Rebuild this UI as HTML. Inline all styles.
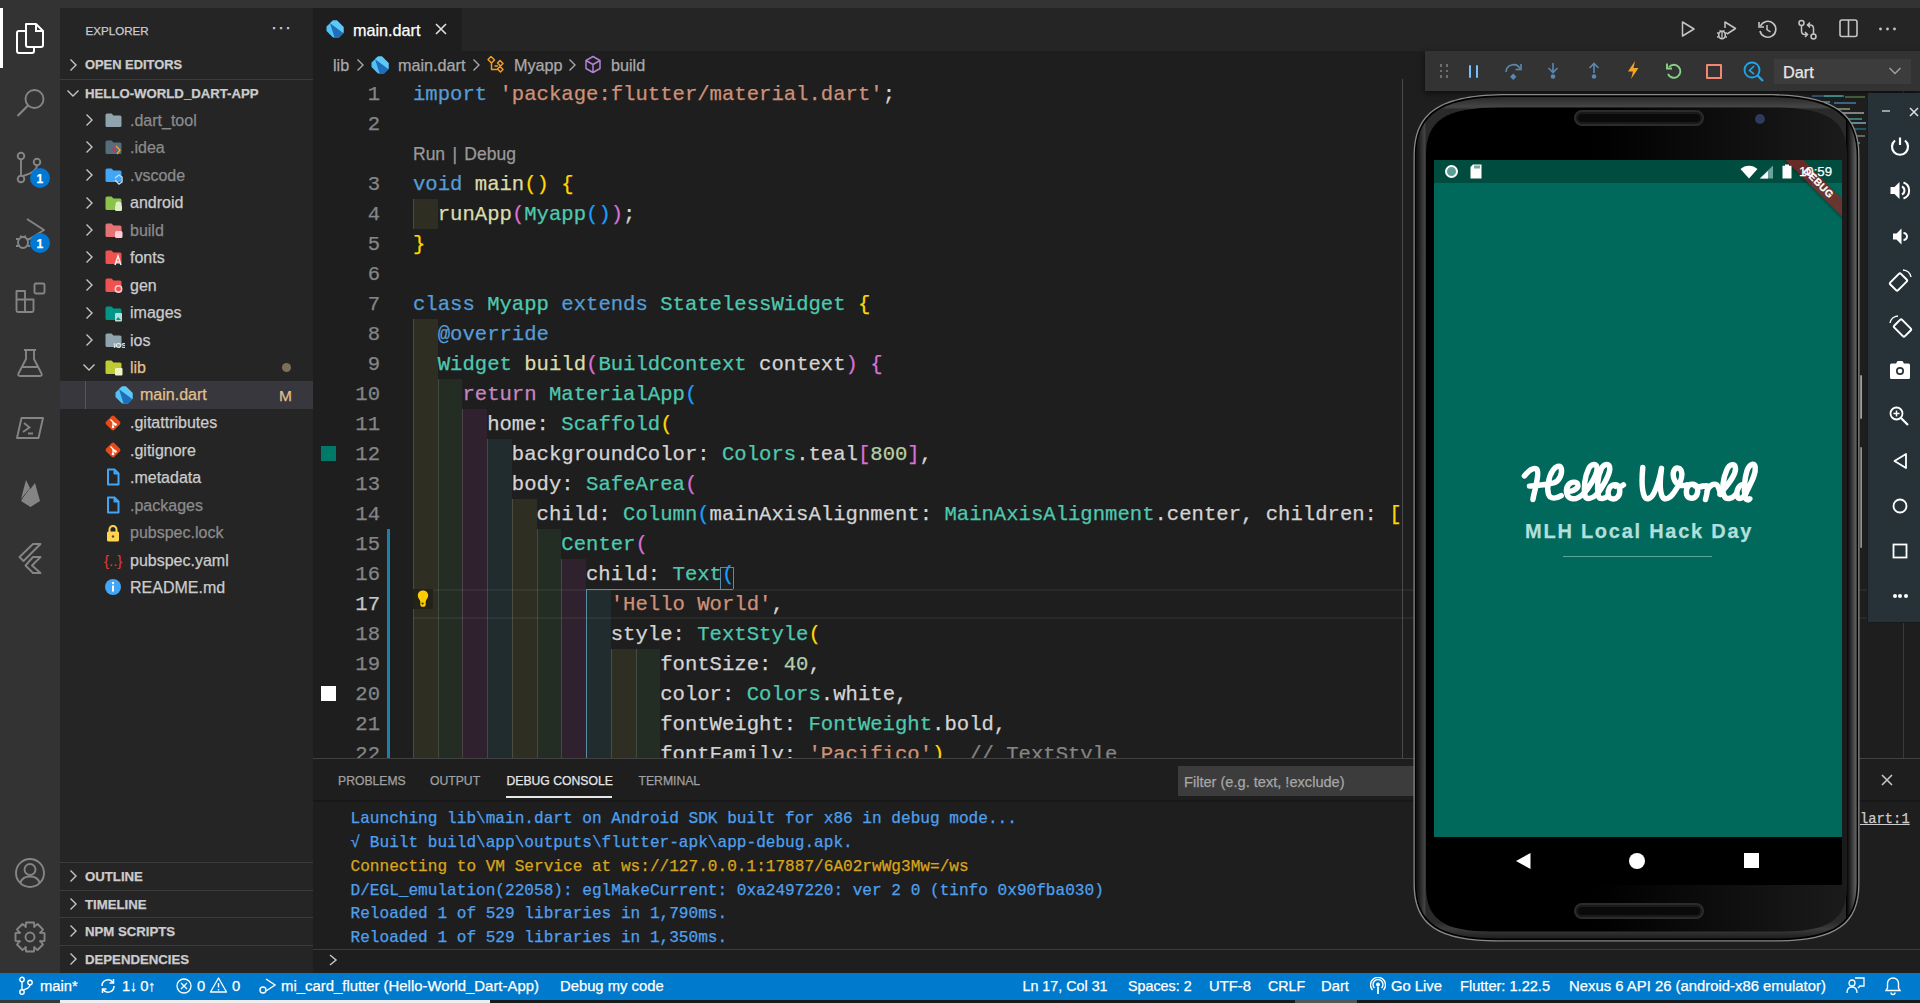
<!DOCTYPE html>
<html><head><meta charset="utf-8">
<style>
*{box-sizing:border-box}
html,body{margin:0;padding:0}
body{-webkit-text-stroke:0.25px currentColor;width:1920px;height:1003px;position:relative;overflow:hidden;background:#1e1e1e;font-family:"Liberation Sans",sans-serif;}
.a{position:absolute}
.ln{position:absolute;white-space:pre;font-family:"Liberation Mono",monospace;font-size:20.6px;line-height:30px;height:30px;color:#d4d4d4}
.num{position:absolute;width:60px;left:320px;text-align:right;font-family:"Liberation Mono",monospace;font-size:20.6px;line-height:30px;color:#858585}
.k{color:#569cd6}.s{color:#ce9178}.t{color:#4ec9b0}.f{color:#dcdcaa}.n{color:#b5cea8}.p{color:#c586c0}
.b1{color:#ffd700}.b2{color:#da70d6}.b3{color:#179fff}.cm{color:#858585}
.ib{position:absolute;height:30px;border-left:1px solid rgba(255,255,255,0.14)}
.y{background:#2e2e22}.g{background:#232d24}.m{background:#2f222e}.c{background:#212c2e}
.tree{position:absolute;height:27.5px;font-size:16px;line-height:27.5px;color:#cccccc;white-space:nowrap}
</style></head><body>
<div class="a" style="left:0px;top:0px;width:1920px;height:8px;background:#333333;"></div>
<div class="a" style="left:0px;top:8px;width:60px;height:965px;background:#333333;"></div>
<div class="a" style="left:0px;top:8px;width:3px;height:60px;background:#ffffff;"></div>
<div class="a" style="left:60px;top:8px;width:253px;height:965px;background:#252526;"></div>
<div class="a" style="left:313px;top:8px;width:1607px;height:43px;background:#252526;"></div>
<div class="a" style="left:313px;top:8px;width:149px;height:43px;background:#1e1e1e;"></div>
<div class="a" style="left:0px;top:973px;width:1920px;height:27px;background:#007acc;"></div>
<div class="a" style="left:0px;top:1000px;width:60px;height:3px;background:#3a3836;"></div>
<div class="a" style="left:60px;top:1000px;width:430px;height:3px;background:#f0ecec;"></div>
<div class="a" style="left:490px;top:1000px;width:1430px;height:3px;background:#1a1a1a;"></div>
<div class="a" style="left:85.5px;top:25.18px;font-size:11.6px;line-height:11.6px;color:#cccccc;font-weight:normal;font-family:'Liberation Sans';white-space:pre;">EXPLORER</div>
<div class="a" style="left:271px;top:17.76px;font-size:18px;line-height:18px;color:#cccccc;font-weight:normal;font-family:'Liberation Sans';white-space:pre;letter-spacing:1px">&middot;&middot;&middot;</div>
<svg class="a" style="left:68px;top:58px;" width="10" height="14" viewBox="0 0 10 14"><path d="M2.5 1.5 L8 7 L2.5 12.5" fill="none" stroke="#c5c5c5" stroke-width="1.4"/></svg>
<div class="a" style="left:85px;top:59.08px;font-size:12.9px;line-height:12.9px;color:#cccccc;font-weight:bold;font-family:'Liberation Sans';white-space:pre;">OPEN EDITORS</div>
<div class="a" style="left:60px;top:79px;width:253px;height:1px;background:#3c3c3c;"></div>
<svg class="a" style="left:66px;top:88px;" width="14" height="10" viewBox="0 0 14 10"><path d="M1.5 2.5 L7 8 L12.5 2.5" fill="none" stroke="#c5c5c5" stroke-width="1.4"/></svg>
<div class="a" style="left:85px;top:86.83px;font-size:13.2px;line-height:13.2px;color:#cccccc;font-weight:bold;font-family:'Liberation Sans';white-space:pre;">HELLO-WORLD_DART-APP</div>
<svg class="a" style="left:84px;top:113px;" width="10" height="14" viewBox="0 0 10 14"><path d="M2.5 1.5 L8 7 L2.5 12.5" fill="none" stroke="#c5c5c5" stroke-width="1.4"/></svg>
<svg class="a" style="left:105px;top:113px;" width="20" height="18" viewBox="0 0 20 18"><path d="M0.5 2 Q0.5 0.5 2 0.5 H6.5 L8.5 2.5 H15 Q16.5 2.5 16.5 4 V12.5 Q16.5 14 15 14 H2 Q0.5 14 0.5 12.5 Z" fill="#90a4ae"/></svg>
<div class="a" style="left:130px;top:112.86px;font-size:16px;line-height:16px;color:#8b8b8b;font-weight:normal;font-family:'Liberation Sans';white-space:pre;">.dart_tool</div>
<svg class="a" style="left:84px;top:140px;" width="10" height="14" viewBox="0 0 10 14"><path d="M2.5 1.5 L8 7 L2.5 12.5" fill="none" stroke="#c5c5c5" stroke-width="1.4"/></svg>
<svg class="a" style="left:105px;top:140px;" width="20" height="18" viewBox="0 0 20 18"><path d="M0.5 2 Q0.5 0.5 2 0.5 H6.5 L8.5 2.5 H15 Q16.5 2.5 16.5 4 V12.5 Q16.5 14 15 14 H2 Q0.5 14 0.5 12.5 Z" fill="#546e7a"/><path d="M11 6 L8 9 L11 12" fill="none" stroke="#e91e63" stroke-width="1.3"/><path d="M11 6 L15 10 L12 14" fill="none" stroke="#f9a825" stroke-width="1.3"/></svg>
<div class="a" style="left:130px;top:140.36px;font-size:16px;line-height:16px;color:#8b8b8b;font-weight:normal;font-family:'Liberation Sans';white-space:pre;">.idea</div>
<svg class="a" style="left:84px;top:168px;" width="10" height="14" viewBox="0 0 10 14"><path d="M2.5 1.5 L8 7 L2.5 12.5" fill="none" stroke="#c5c5c5" stroke-width="1.4"/></svg>
<svg class="a" style="left:105px;top:168px;" width="20" height="18" viewBox="0 0 20 18"><path d="M0.5 2 Q0.5 0.5 2 0.5 H6.5 L8.5 2.5 H15 Q16.5 2.5 16.5 4 V12.5 Q16.5 14 15 14 H2 Q0.5 14 0.5 12.5 Z" fill="#42a5f5"/><path d="M10 10 L14 7 L17 9 V14 L14 16 L10 12" fill="none" stroke="#bbdefb" stroke-width="1.4"/></svg>
<div class="a" style="left:130px;top:167.86px;font-size:16px;line-height:16px;color:#8b8b8b;font-weight:normal;font-family:'Liberation Sans';white-space:pre;">.vscode</div>
<svg class="a" style="left:84px;top:196px;" width="10" height="14" viewBox="0 0 10 14"><path d="M2.5 1.5 L8 7 L2.5 12.5" fill="none" stroke="#c5c5c5" stroke-width="1.4"/></svg>
<svg class="a" style="left:105px;top:196px;" width="20" height="18" viewBox="0 0 20 18"><path d="M0.5 2 Q0.5 0.5 2 0.5 H6.5 L8.5 2.5 H15 Q16.5 2.5 16.5 4 V12.5 Q16.5 14 15 14 H2 Q0.5 14 0.5 12.5 Z" fill="#8bc34a"/><rect x="10" y="9" width="7" height="6" rx="1.5" fill="#dcedc8"/><circle cx="13.5" cy="8.5" r="3" fill="#dcedc8"/></svg>
<div class="a" style="left:130px;top:195.36px;font-size:16px;line-height:16px;color:#cccccc;font-weight:normal;font-family:'Liberation Sans';white-space:pre;">android</div>
<svg class="a" style="left:84px;top:223px;" width="10" height="14" viewBox="0 0 10 14"><path d="M2.5 1.5 L8 7 L2.5 12.5" fill="none" stroke="#c5c5c5" stroke-width="1.4"/></svg>
<svg class="a" style="left:105px;top:223px;" width="20" height="18" viewBox="0 0 20 18"><path d="M0.5 2 Q0.5 0.5 2 0.5 H6.5 L8.5 2.5 H15 Q16.5 2.5 16.5 4 V12.5 Q16.5 14 15 14 H2 Q0.5 14 0.5 12.5 Z" fill="#e57373"/><rect x="10" y="8" width="7.5" height="7" rx="1.5" fill="#ffcdd2"/></svg>
<div class="a" style="left:130px;top:222.86px;font-size:16px;line-height:16px;color:#8b8b8b;font-weight:normal;font-family:'Liberation Sans';white-space:pre;">build</div>
<svg class="a" style="left:84px;top:250px;" width="10" height="14" viewBox="0 0 10 14"><path d="M2.5 1.5 L8 7 L2.5 12.5" fill="none" stroke="#c5c5c5" stroke-width="1.4"/></svg>
<svg class="a" style="left:105px;top:250px;" width="20" height="18" viewBox="0 0 20 18"><path d="M0.5 2 Q0.5 0.5 2 0.5 H6.5 L8.5 2.5 H15 Q16.5 2.5 16.5 4 V12.5 Q16.5 14 15 14 H2 Q0.5 14 0.5 12.5 Z" fill="#ef5350"/><path d="M10 15 L13 6 L16 15 M11 12 H15" fill="none" stroke="#ffebee" stroke-width="1.5"/></svg>
<div class="a" style="left:130px;top:250.36px;font-size:16px;line-height:16px;color:#cccccc;font-weight:normal;font-family:'Liberation Sans';white-space:pre;">fonts</div>
<svg class="a" style="left:84px;top:278px;" width="10" height="14" viewBox="0 0 10 14"><path d="M2.5 1.5 L8 7 L2.5 12.5" fill="none" stroke="#c5c5c5" stroke-width="1.4"/></svg>
<svg class="a" style="left:105px;top:278px;" width="20" height="18" viewBox="0 0 20 18"><path d="M0.5 2 Q0.5 0.5 2 0.5 H6.5 L8.5 2.5 H15 Q16.5 2.5 16.5 4 V12.5 Q16.5 14 15 14 H2 Q0.5 14 0.5 12.5 Z" fill="#ef5350"/><circle cx="13.5" cy="11" r="3.2" fill="none" stroke="#ffcdd2" stroke-width="1.5"/></svg>
<div class="a" style="left:130px;top:277.86px;font-size:16px;line-height:16px;color:#cccccc;font-weight:normal;font-family:'Liberation Sans';white-space:pre;">gen</div>
<svg class="a" style="left:84px;top:306px;" width="10" height="14" viewBox="0 0 10 14"><path d="M2.5 1.5 L8 7 L2.5 12.5" fill="none" stroke="#c5c5c5" stroke-width="1.4"/></svg>
<svg class="a" style="left:105px;top:306px;" width="20" height="18" viewBox="0 0 20 18"><path d="M0.5 2 Q0.5 0.5 2 0.5 H6.5 L8.5 2.5 H15 Q16.5 2.5 16.5 4 V12.5 Q16.5 14 15 14 H2 Q0.5 14 0.5 12.5 Z" fill="#009688"/><rect x="10" y="7" width="7" height="8.5" rx="1" fill="#b2dfdb"/><path d="M11 14 L13 11 L16 14" fill="#009688"/></svg>
<div class="a" style="left:130px;top:305.36px;font-size:16px;line-height:16px;color:#cccccc;font-weight:normal;font-family:'Liberation Sans';white-space:pre;">images</div>
<svg class="a" style="left:84px;top:333px;" width="10" height="14" viewBox="0 0 10 14"><path d="M2.5 1.5 L8 7 L2.5 12.5" fill="none" stroke="#c5c5c5" stroke-width="1.4"/></svg>
<svg class="a" style="left:105px;top:333px;" width="20" height="18" viewBox="0 0 20 18"><path d="M0.5 2 Q0.5 0.5 2 0.5 H6.5 L8.5 2.5 H15 Q16.5 2.5 16.5 4 V12.5 Q16.5 14 15 14 H2 Q0.5 14 0.5 12.5 Z" fill="#90a4ae"/><text x="8.5" y="15" font-size="7.5" font-family="Liberation Sans" font-weight="bold" fill="#eceff1">iOS</text></svg>
<div class="a" style="left:130px;top:332.86px;font-size:16px;line-height:16px;color:#cccccc;font-weight:normal;font-family:'Liberation Sans';white-space:pre;">ios</div>
<svg class="a" style="left:82px;top:362px;" width="14" height="10" viewBox="0 0 14 10"><path d="M1.5 2.5 L7 8 L12.5 2.5" fill="none" stroke="#c5c5c5" stroke-width="1.4"/></svg>
<svg class="a" style="left:105px;top:360px;" width="20" height="18" viewBox="0 0 20 18"><path d="M0.5 2 Q0.5 0.5 2 0.5 H6.5 L8.5 2.5 H15 Q16.5 2.5 16.5 4 V12.5 Q16.5 14 15 14 H2 Q0.5 14 0.5 12.5 Z" fill="#c0ca33"/><rect x="10" y="8" width="7.5" height="7.5" rx="1" fill="#f0f4c3"/></svg>
<div class="a" style="left:130px;top:360.36px;font-size:16px;line-height:16px;color:#e2c08d;font-weight:normal;font-family:'Liberation Sans';white-space:pre;">lib</div>
<div class="a" style="left:282px;top:363px;width:9px;height:9px;background:#7d6e5a;border-radius:50%"></div>
<div class="a" style="left:60px;top:381px;width:253px;height:28px;background:#37373d;"></div>
<div class="a" style="left:85px;top:381px;width:1px;height:28px;background:#585858;"></div>
<svg class="a" style="left:115px;top:386px;" width="18" height="18" viewBox="0 0 18 18"><path d="M7 0.5 L11 0.5 L17.5 7 L17.5 13 L13 17.5 L7 17.5 L0.5 11 L0.5 6.5 Z" fill="#4fc3f7"/><path d="M4 3 L17.5 13 L13 17.5 L8.5 17.5 Z" fill="#1e6fb8"/><path d="M4 3 L7 0.5 L11 0.5 L17.5 7 L17.5 13 Z" fill="#5ec8f8"/></svg>
<div class="a" style="left:140px;top:387.46px;font-size:16px;line-height:16px;color:#e2c08d;font-weight:normal;font-family:'Liberation Sans';white-space:pre;">main.dart</div>
<div class="a" style="left:279px;top:387.88px;font-size:15.5px;line-height:15.5px;color:#e2c08d;font-weight:normal;font-family:'Liberation Sans';white-space:pre;">M</div>
<svg class="a" style="left:104px;top:414px;" width="18" height="18" viewBox="0 0 18 18"><rect x="3.2" y="3.2" width="11.6" height="11.6" rx="2" transform="rotate(45 9 9)" fill="#e64a19"/><path d="M6.5 5.5 L11.5 10.5 M9 8 V13" stroke="#ffffff" stroke-width="1.3" fill="none"/><circle cx="9" cy="13" r="1.3" fill="#fff"/><circle cx="11.5" cy="10.5" r="1.3" fill="#fff"/></svg>
<div class="a" style="left:130px;top:415.36px;font-size:16px;line-height:16px;color:#cccccc;font-weight:normal;font-family:'Liberation Sans';white-space:pre;">.gitattributes</div>
<svg class="a" style="left:104px;top:441px;" width="18" height="18" viewBox="0 0 18 18"><rect x="3.2" y="3.2" width="11.6" height="11.6" rx="2" transform="rotate(45 9 9)" fill="#e64a19"/><path d="M6.5 5.5 L11.5 10.5 M9 8 V13" stroke="#ffffff" stroke-width="1.3" fill="none"/><circle cx="9" cy="13" r="1.3" fill="#fff"/><circle cx="11.5" cy="10.5" r="1.3" fill="#fff"/></svg>
<div class="a" style="left:130px;top:442.86px;font-size:16px;line-height:16px;color:#cccccc;font-weight:normal;font-family:'Liberation Sans';white-space:pre;">.gitignore</div>
<svg class="a" style="left:104px;top:468px;" width="18" height="18" viewBox="0 0 18 18"><path d="M4 1.5 H10.5 L14.5 5.5 V16.5 H4 Z M10.5 1.5 V5.5 H14.5" fill="none" stroke="#42a5f5" stroke-width="2" stroke-linejoin="round"/></svg>
<div class="a" style="left:130px;top:470.36px;font-size:16px;line-height:16px;color:#cccccc;font-weight:normal;font-family:'Liberation Sans';white-space:pre;">.metadata</div>
<svg class="a" style="left:104px;top:496px;" width="18" height="18" viewBox="0 0 18 18"><path d="M4 1.5 H10.5 L14.5 5.5 V16.5 H4 Z M10.5 1.5 V5.5 H14.5" fill="none" stroke="#42a5f5" stroke-width="2" stroke-linejoin="round"/></svg>
<div class="a" style="left:130px;top:497.86px;font-size:16px;line-height:16px;color:#8b8b8b;font-weight:normal;font-family:'Liberation Sans';white-space:pre;">.packages</div>
<svg class="a" style="left:104px;top:524px;" width="18" height="18" viewBox="0 0 18 18"><path d="M5.5 8 V5.5 A3.5 3.5 0 0 1 12.5 5.5 V8" fill="none" stroke="#ffd54f" stroke-width="2"/><rect x="3" y="7.5" width="12" height="10" rx="1.5" fill="#ffd54f"/><circle cx="9" cy="12.5" r="1.2" fill="#5d4037"/></svg>
<div class="a" style="left:130px;top:525.36px;font-size:16px;line-height:16px;color:#8b8b8b;font-weight:normal;font-family:'Liberation Sans';white-space:pre;">pubspec.lock</div>
<svg class="a" style="left:104px;top:551px;" width="22" height="20" viewBox="0 0 22 20"><text x="0" y="15" font-size="15" font-family="Liberation Sans" fill="#e53935">{..}</text></svg>
<div class="a" style="left:130px;top:552.86px;font-size:16px;line-height:16px;color:#cccccc;font-weight:normal;font-family:'Liberation Sans';white-space:pre;">pubspec.yaml</div>
<svg class="a" style="left:104px;top:578px;" width="18" height="18" viewBox="0 0 18 18"><circle cx="9" cy="9" r="8" fill="#42a5f5"/><rect x="8" y="7.5" width="2" height="6" fill="#fff"/><circle cx="9" cy="5" r="1.2" fill="#fff"/></svg>
<div class="a" style="left:130px;top:580.36px;font-size:16px;line-height:16px;color:#cccccc;font-weight:normal;font-family:'Liberation Sans';white-space:pre;">README.md</div>
<div class="a" style="left:60px;top:862px;width:253px;height:1px;background:#3c3c3c;"></div>
<svg class="a" style="left:68px;top:869px;" width="10" height="14" viewBox="0 0 10 14"><path d="M2.5 1.5 L8 7 L2.5 12.5" fill="none" stroke="#c5c5c5" stroke-width="1.4"/></svg>
<div class="a" style="left:85px;top:869.83px;font-size:13.2px;line-height:13.2px;color:#cccccc;font-weight:bold;font-family:'Liberation Sans';white-space:pre;">OUTLINE</div>
<div class="a" style="left:60px;top:890px;width:253px;height:1px;background:#3c3c3c;"></div>
<svg class="a" style="left:68px;top:897px;" width="10" height="14" viewBox="0 0 10 14"><path d="M2.5 1.5 L8 7 L2.5 12.5" fill="none" stroke="#c5c5c5" stroke-width="1.4"/></svg>
<div class="a" style="left:85px;top:897.83px;font-size:13.2px;line-height:13.2px;color:#cccccc;font-weight:bold;font-family:'Liberation Sans';white-space:pre;">TIMELINE</div>
<div class="a" style="left:60px;top:917px;width:253px;height:1px;background:#3c3c3c;"></div>
<svg class="a" style="left:68px;top:924px;" width="10" height="14" viewBox="0 0 10 14"><path d="M2.5 1.5 L8 7 L2.5 12.5" fill="none" stroke="#c5c5c5" stroke-width="1.4"/></svg>
<div class="a" style="left:85px;top:924.83px;font-size:13.2px;line-height:13.2px;color:#cccccc;font-weight:bold;font-family:'Liberation Sans';white-space:pre;">NPM SCRIPTS</div>
<div class="a" style="left:60px;top:945px;width:253px;height:1px;background:#3c3c3c;"></div>
<svg class="a" style="left:68px;top:952px;" width="10" height="14" viewBox="0 0 10 14"><path d="M2.5 1.5 L8 7 L2.5 12.5" fill="none" stroke="#c5c5c5" stroke-width="1.4"/></svg>
<div class="a" style="left:85px;top:952.83px;font-size:13.2px;line-height:13.2px;color:#cccccc;font-weight:bold;font-family:'Liberation Sans';white-space:pre;">DEPENDENCIES</div>
<div class="a" style="left:313px;top:79px;width:1607px;height:679px;overflow:hidden">
<div class="a" style="left:-313px;top:-79px;width:1920px;height:1003px">
<div class="ib y" style="left:413px;top:199px;width:25px"></div>
<div class="ib y" style="left:413px;top:319px;width:25px"></div>
<div class="ib y" style="left:413px;top:349px;width:25px"></div>
<div class="ib y" style="left:413px;top:379px;width:25px"></div>
<div class="ib g" style="left:438px;top:379px;width:24px"></div>
<div class="ib y" style="left:413px;top:409px;width:25px"></div>
<div class="ib g" style="left:438px;top:409px;width:24px"></div>
<div class="ib m" style="left:462px;top:409px;width:25px"></div>
<div class="ib y" style="left:413px;top:439px;width:25px"></div>
<div class="ib g" style="left:438px;top:439px;width:24px"></div>
<div class="ib m" style="left:462px;top:439px;width:25px"></div>
<div class="ib c" style="left:487px;top:439px;width:25px"></div>
<div class="ib y" style="left:413px;top:469px;width:25px"></div>
<div class="ib g" style="left:438px;top:469px;width:24px"></div>
<div class="ib m" style="left:462px;top:469px;width:25px"></div>
<div class="ib c" style="left:487px;top:469px;width:25px"></div>
<div class="ib y" style="left:413px;top:499px;width:25px"></div>
<div class="ib g" style="left:438px;top:499px;width:24px"></div>
<div class="ib m" style="left:462px;top:499px;width:25px"></div>
<div class="ib c" style="left:487px;top:499px;width:25px"></div>
<div class="ib y" style="left:512px;top:499px;width:25px"></div>
<div class="ib y" style="left:413px;top:529px;width:25px"></div>
<div class="ib g" style="left:438px;top:529px;width:24px"></div>
<div class="ib m" style="left:462px;top:529px;width:25px"></div>
<div class="ib c" style="left:487px;top:529px;width:25px"></div>
<div class="ib y" style="left:512px;top:529px;width:25px"></div>
<div class="ib g" style="left:537px;top:529px;width:24px"></div>
<div class="ib y" style="left:413px;top:559px;width:25px"></div>
<div class="ib g" style="left:438px;top:559px;width:24px"></div>
<div class="ib m" style="left:462px;top:559px;width:25px"></div>
<div class="ib c" style="left:487px;top:559px;width:25px"></div>
<div class="ib y" style="left:512px;top:559px;width:25px"></div>
<div class="ib g" style="left:537px;top:559px;width:24px"></div>
<div class="ib m" style="left:561px;top:559px;width:25px"></div>
<div class="ib y" style="left:413px;top:589px;width:25px"></div>
<div class="ib g" style="left:438px;top:589px;width:24px"></div>
<div class="ib m" style="left:462px;top:589px;width:25px"></div>
<div class="ib c" style="left:487px;top:589px;width:25px"></div>
<div class="ib y" style="left:512px;top:589px;width:25px"></div>
<div class="ib g" style="left:537px;top:589px;width:24px"></div>
<div class="ib m" style="left:561px;top:589px;width:25px"></div>
<div class="ib c" style="left:586px;top:589px;width:25px"></div>
<div class="ib y" style="left:413px;top:619px;width:25px"></div>
<div class="ib g" style="left:438px;top:619px;width:24px"></div>
<div class="ib m" style="left:462px;top:619px;width:25px"></div>
<div class="ib c" style="left:487px;top:619px;width:25px"></div>
<div class="ib y" style="left:512px;top:619px;width:25px"></div>
<div class="ib g" style="left:537px;top:619px;width:24px"></div>
<div class="ib m" style="left:561px;top:619px;width:25px"></div>
<div class="ib c" style="left:586px;top:619px;width:25px"></div>
<div class="ib y" style="left:413px;top:649px;width:25px"></div>
<div class="ib g" style="left:438px;top:649px;width:24px"></div>
<div class="ib m" style="left:462px;top:649px;width:25px"></div>
<div class="ib c" style="left:487px;top:649px;width:25px"></div>
<div class="ib y" style="left:512px;top:649px;width:25px"></div>
<div class="ib g" style="left:537px;top:649px;width:24px"></div>
<div class="ib m" style="left:561px;top:649px;width:25px"></div>
<div class="ib c" style="left:586px;top:649px;width:25px"></div>
<div class="ib y" style="left:611px;top:649px;width:25px"></div>
<div class="ib g" style="left:636px;top:649px;width:24px"></div>
<div class="ib y" style="left:413px;top:679px;width:25px"></div>
<div class="ib g" style="left:438px;top:679px;width:24px"></div>
<div class="ib m" style="left:462px;top:679px;width:25px"></div>
<div class="ib c" style="left:487px;top:679px;width:25px"></div>
<div class="ib y" style="left:512px;top:679px;width:25px"></div>
<div class="ib g" style="left:537px;top:679px;width:24px"></div>
<div class="ib m" style="left:561px;top:679px;width:25px"></div>
<div class="ib c" style="left:586px;top:679px;width:25px"></div>
<div class="ib y" style="left:611px;top:679px;width:25px"></div>
<div class="ib g" style="left:636px;top:679px;width:24px"></div>
<div class="ib y" style="left:413px;top:709px;width:25px"></div>
<div class="ib g" style="left:438px;top:709px;width:24px"></div>
<div class="ib m" style="left:462px;top:709px;width:25px"></div>
<div class="ib c" style="left:487px;top:709px;width:25px"></div>
<div class="ib y" style="left:512px;top:709px;width:25px"></div>
<div class="ib g" style="left:537px;top:709px;width:24px"></div>
<div class="ib m" style="left:561px;top:709px;width:25px"></div>
<div class="ib c" style="left:586px;top:709px;width:25px"></div>
<div class="ib y" style="left:611px;top:709px;width:25px"></div>
<div class="ib g" style="left:636px;top:709px;width:24px"></div>
<div class="ib y" style="left:413px;top:739px;width:25px"></div>
<div class="ib g" style="left:438px;top:739px;width:24px"></div>
<div class="ib m" style="left:462px;top:739px;width:25px"></div>
<div class="ib c" style="left:487px;top:739px;width:25px"></div>
<div class="ib y" style="left:512px;top:739px;width:25px"></div>
<div class="ib g" style="left:537px;top:739px;width:24px"></div>
<div class="ib m" style="left:561px;top:739px;width:25px"></div>
<div class="ib c" style="left:586px;top:739px;width:25px"></div>
<div class="ib y" style="left:611px;top:739px;width:25px"></div>
<div class="ib g" style="left:636px;top:739px;width:24px"></div>
<div class="num" style="top:80px">1</div>
<div class="ln" style="left:413px;top:80px"><span class="k">import</span> <span class="s">'package:flutter/material.dart'</span>;</div>
<div class="num" style="top:110px">2</div>
<div class="num" style="top:170px">3</div>
<div class="ln" style="left:413px;top:170px"><span class="k">void</span> <span class="f">main</span><span class="b1">()</span> <span class="b1">{</span></div>
<div class="num" style="top:200px">4</div>
<div class="ln" style="left:413px;top:200px">  <span class="f">runApp</span><span class="b2">(</span><span class="t">Myapp</span><span class="b3">()</span><span class="b2">)</span>;</div>
<div class="num" style="top:230px">5</div>
<div class="ln" style="left:413px;top:230px"><span class="b1">}</span></div>
<div class="num" style="top:260px">6</div>
<div class="num" style="top:290px">7</div>
<div class="ln" style="left:413px;top:290px"><span class="k">class</span> <span class="t">Myapp</span> <span class="k">extends</span> <span class="t">StatelessWidget</span> <span class="b1">{</span></div>
<div class="num" style="top:320px">8</div>
<div class="ln" style="left:413px;top:320px">  <span class="k">@override</span></div>
<div class="num" style="top:350px">9</div>
<div class="ln" style="left:413px;top:350px">  <span class="t">Widget</span> <span class="f">build</span><span class="b2">(</span><span class="t">BuildContext</span> context<span class="b2">)</span> <span class="b2">{</span></div>
<div class="num" style="top:380px">10</div>
<div class="ln" style="left:413px;top:380px">    <span class="p">return</span> <span class="t">MaterialApp</span><span class="b3">(</span></div>
<div class="num" style="top:410px">11</div>
<div class="ln" style="left:413px;top:410px">      home: <span class="t">Scaffold</span><span class="b1">(</span></div>
<div class="num" style="top:440px">12</div>
<div class="ln" style="left:413px;top:440px">        backgroundColor: <span class="t">Colors</span>.teal<span class="b2">[</span><span class="n">800</span><span class="b2">]</span>,</div>
<div class="num" style="top:470px">13</div>
<div class="ln" style="left:413px;top:470px">        body: <span class="t">SafeArea</span><span class="b2">(</span></div>
<div class="num" style="top:500px">14</div>
<div class="ln" style="left:413px;top:500px">          child: <span class="t">Column</span><span class="b3">(</span>mainAxisAlignment: <span class="t">MainAxisAlignment</span>.center, children: <span class="b1">[</span></div>
<div class="num" style="top:530px">15</div>
<div class="ln" style="left:413px;top:530px">            <span class="t">Center</span><span class="b2">(</span></div>
<div class="num" style="top:560px">16</div>
<div class="ln" style="left:413px;top:560px">              child: <span class="t">Text</span><span class="b3">(</span></div>
<div class="num" style="top:590px;color:#c6c6c6">17</div>
<div class="ln" style="left:413px;top:590px">                <span class="s">'Hello World'</span>,</div>
<div class="num" style="top:620px">18</div>
<div class="ln" style="left:413px;top:620px">                style: <span class="t">TextStyle</span><span class="b1">(</span></div>
<div class="num" style="top:650px">19</div>
<div class="ln" style="left:413px;top:650px">                    fontSize: <span class="n">40</span>,</div>
<div class="num" style="top:680px">20</div>
<div class="ln" style="left:413px;top:680px">                    color: <span class="t">Colors</span>.white,</div>
<div class="num" style="top:710px">21</div>
<div class="ln" style="left:413px;top:710px">                    fontWeight: <span class="t">FontWeight</span>.bold,</div>
<div class="num" style="top:740px">22</div>
<div class="ln" style="left:413px;top:740px">                    fontFamily: <span class="s">'Pacifico'</span><span class="b1">)</span>  <span class="cm">// TextStyle</span></div>
</div></div>
<svg class="a" style="left:14px;top:22px;" width="32" height="33" viewBox="0 0 32 33"><path d="M12 2 H22 L29 9 V23 Q29 25 27 25 H14 Q12 25 12 23 Z" fill="none" stroke="#ffffff" stroke-width="2" stroke-linejoin="round"/><path d="M22 2 V9 H29" fill="none" stroke="#ffffff" stroke-width="2"/><path d="M12 9 H5 Q3 9 3 11 V29 Q3 31 5 31 H18 Q20 31 20 29 V25" fill="none" stroke="#ffffff" stroke-width="2" stroke-linejoin="round"/></svg>
<svg class="a" style="left:15px;top:87px;" width="32" height="32" viewBox="0 0 32 32"><circle cx="19.5" cy="12" r="9" stroke="#858585" stroke-width="1.9" fill="none"/><path d="M13 18.5 L2.5 29" stroke="#858585" stroke-width="2.2"/></svg>
<svg class="a" style="left:15px;top:151px;" width="30" height="34" viewBox="0 0 30 34"><circle cx="6" cy="5" r="3.3" stroke="#858585" stroke-width="1.9" fill="none"/><circle cx="6" cy="28" r="3.3" stroke="#858585" stroke-width="1.9" fill="none"/><circle cx="22" cy="11" r="3.3" stroke="#858585" stroke-width="1.9" fill="none"/><path d="M6 8.3 V24.7 M22 14.3 Q22 21 8 25" stroke="#858585" stroke-width="1.9" fill="none"/></svg>
<div class="a" style="left:30px;top:168px;width:20px;height:20px;background:#0078d4;border-radius:50%"></div>
<div class="a" style="left:36.5px;top:172.84px;font-size:12px;line-height:12px;color:#ffffff;font-weight:bold;font-family:'Liberation Sans';white-space:pre;">1</div>
<svg class="a" style="left:14px;top:217px;" width="34" height="34" viewBox="0 0 34 34"><path d="M13 2 L30 13 L14 23" stroke="#858585" stroke-width="1.9" fill="none" stroke-linejoin="round"/><ellipse cx="9" cy="25.5" rx="5" ry="5.5" stroke="#858585" stroke-width="1.9" fill="none"/><path d="M2 22 H4.5 M2 29 H4.5 M13.5 22 H16 M13.5 29 H16 M6 19 L9 20 L12 19" stroke="#858585" stroke-width="1.8"/></svg>
<div class="a" style="left:30px;top:233px;width:20px;height:20px;background:#0078d4;border-radius:50%"></div>
<div class="a" style="left:36.5px;top:237.84px;font-size:12px;line-height:12px;color:#ffffff;font-weight:bold;font-family:'Liberation Sans';white-space:pre;">1</div>
<svg class="a" style="left:14px;top:281px;" width="33" height="33" viewBox="0 0 33 33"><path d="M2.5 10 H11 V18.5 H19.5 V29.5 Q19.5 31 18 31 H4 Q2.5 31 2.5 29.5 Z M2.5 18.5 H11 V31 M11 10 V18.5" stroke="#858585" stroke-width="1.9" fill="none" stroke-linejoin="round"/><rect x="20.5" y="2.5" width="10" height="10" rx="1.5" stroke="#858585" stroke-width="1.9" fill="none"/></svg>
<svg class="a" style="left:16px;top:348px;" width="28" height="30" viewBox="0 0 28 30"><path d="M8 2 H20 M10 2 V11 L2.5 25.5 Q1.5 28 4 28 H24 Q26.5 28 25.5 25.5 L18 11 V2 M6 19 H22" stroke="#858585" stroke-width="1.9" fill="none" stroke-linejoin="round"/></svg>
<svg class="a" style="left:15px;top:416px;" width="30" height="24" viewBox="0 0 30 24"><path d="M6.5 2 H28 L23.5 22 H2 Z" stroke="#858585" stroke-width="1.9" fill="none" stroke-linejoin="round"/><path d="M9 7 L14.5 11.5 L8 16 M13 17.5 H18" stroke="#858585" stroke-width="1.8" fill="none"/></svg>
<svg class="a" style="left:19px;top:478px;" width="23" height="31" viewBox="0 0 23 31"><path d="M2 21 L7 2 L11 10 Z" fill="#858585"/><path d="M2.5 22 L11 10.5 L13.5 15 Z" fill="#9a9a9a"/><path d="M2 23 L16 5 L21 23 L11.5 29 Z" fill="#858585"/></svg>
<svg class="a" style="left:15px;top:542px;" width="28" height="32" viewBox="0 0 28 32"><path d="M18 2 H25.5 L8.5 19 L4.5 15 Z" stroke="#858585" stroke-width="1.9" fill="none" stroke-linejoin="round"/><path d="M18 15 H25.5 L17 23.5 L25.5 31 H18 L10.5 23.5 Z" stroke="#858585" stroke-width="1.9" fill="none" stroke-linejoin="round"/></svg>
<svg class="a" style="left:14px;top:857px;" width="32" height="32" viewBox="0 0 32 32"><circle cx="16" cy="16" r="14" stroke="#858585" stroke-width="1.9" fill="none"/><circle cx="16" cy="12.5" r="5.5" stroke="#858585" stroke-width="1.9" fill="none"/><path d="M6.5 26 Q8 19.5 16 19.5 Q24 19.5 25.5 26" stroke="#858585" stroke-width="1.9" fill="none"/></svg>
<svg class="a" style="left:14px;top:921px;" width="32" height="32" viewBox="0 0 32 32"><path d="M30.50 12.14 L30.50 19.86 L26.04 20.49 L26.27 19.93 L28.98 23.52 L23.52 28.98 L19.93 26.27 L20.49 26.04 L19.86 30.50 L12.14 30.50 L11.51 26.04 L12.07 26.27 L8.48 28.98 L3.02 23.52 L5.73 19.93 L5.96 20.49 L1.50 19.86 L1.50 12.14 L5.96 11.51 L5.73 12.07 L3.02 8.48 L8.48 3.02 L12.07 5.73 L11.51 5.96 L12.14 1.50 L19.86 1.50 L20.49 5.96 L19.93 5.73 L23.52 3.02 L28.98 8.48 L26.27 12.07 L26.04 11.51 Z" stroke="#858585" stroke-width="1.9" fill="none" stroke-linejoin="round"/><circle cx="16" cy="16" r="4.5" stroke="#858585" stroke-width="1.9" fill="none"/></svg>
<svg class="a" style="left:326px;top:20px;" width="18" height="18" viewBox="0 0 18 18"><path d="M7 0.5 L11 0.5 L17.5 7 L17.5 13 L13 17.5 L7 17.5 L0.5 11 L0.5 6.5 Z" fill="#4fc3f7"/><path d="M4 3 L17.5 13 L13 17.5 L8.5 17.5 Z" fill="#1e6fb8"/><path d="M4 3 L7 0.5 L11 0.5 L17.5 7 L17.5 13 Z" fill="#5ec8f8"/></svg>
<div class="a" style="left:353px;top:21.79px;font-size:16.2px;line-height:16.2px;color:#ffffff;font-weight:normal;font-family:'Liberation Sans';white-space:pre;">main.dart</div>
<svg class="a" style="left:434px;top:22px;" width="14" height="14" viewBox="0 0 14 14"><path d="M2 2 L12 12 M12 2 L2 12" stroke="#e0e0e0" stroke-width="1.6"/></svg>
<div class="a" style="left:333px;top:56.79px;font-size:16.2px;line-height:16.2px;color:#a9a9a9;font-weight:normal;font-family:'Liberation Sans';white-space:pre;">lib</div>
<svg class="a" style="left:355px;top:58px;" width="10" height="14" viewBox="0 0 10 14"><path d="M2.5 1.5 L8 7 L2.5 12.5" fill="none" stroke="#a9a9a9" stroke-width="1.4"/></svg>
<svg class="a" style="left:371px;top:56px;" width="18" height="18" viewBox="0 0 18 18"><path d="M7 0.5 L11 0.5 L17.5 7 L17.5 13 L13 17.5 L7 17.5 L0.5 11 L0.5 6.5 Z" fill="#4fc3f7"/><path d="M4 3 L17.5 13 L13 17.5 L8.5 17.5 Z" fill="#1e6fb8"/><path d="M4 3 L7 0.5 L11 0.5 L17.5 7 L17.5 13 Z" fill="#5ec8f8"/></svg>
<div class="a" style="left:398px;top:56.79px;font-size:16.2px;line-height:16.2px;color:#a9a9a9;font-weight:normal;font-family:'Liberation Sans';white-space:pre;">main.dart</div>
<svg class="a" style="left:471px;top:58px;" width="10" height="14" viewBox="0 0 10 14"><path d="M2.5 1.5 L8 7 L2.5 12.5" fill="none" stroke="#a9a9a9" stroke-width="1.4"/></svg>
<svg class="a" style="left:486px;top:55px;" width="20" height="20" viewBox="0 0 20 20"><path d="M2 4.5 L5 1.5 L8.5 5 L5.5 8 Z M11.5 8 L14 5.5 L17 8.5 L14.5 11 Z M11.5 14 L14 11.5 L17 14.5 L14.5 17 Z M5.5 8 V14.5 H11.5 M8.5 11 H12" fill="none" stroke="#ee9d28" stroke-width="1.5" stroke-linejoin="round"/></svg>
<div class="a" style="left:514px;top:56.79px;font-size:16.2px;line-height:16.2px;color:#a9a9a9;font-weight:normal;font-family:'Liberation Sans';white-space:pre;">Myapp</div>
<svg class="a" style="left:567px;top:58px;" width="10" height="14" viewBox="0 0 10 14"><path d="M2.5 1.5 L8 7 L2.5 12.5" fill="none" stroke="#a9a9a9" stroke-width="1.4"/></svg>
<svg class="a" style="left:584px;top:55px;" width="18" height="20" viewBox="0 0 18 20"><path d="M9 1.5 L16 5.5 V13.5 L9 17.5 L2 13.5 V5.5 Z M2 5.5 L9 9.5 L16 5.5 M9 9.5 V17.5" fill="none" stroke="#b180d7" stroke-width="1.5" stroke-linejoin="round"/></svg>
<div class="a" style="left:611px;top:56.79px;font-size:16.2px;line-height:16.2px;color:#a9a9a9;font-weight:normal;font-family:'Liberation Sans';white-space:pre;">build</div>
<svg class="a" style="left:1680px;top:20px;" width="16" height="18" viewBox="0 0 16 18"><path d="M2.5 2 L14 9 L2.5 16 Z" fill="none" stroke="#c5c5c5" stroke-width="1.5" stroke-linejoin="round"/></svg>
<svg class="a" style="left:1716px;top:20px;" width="22" height="21" viewBox="0 0 22 21"><path d="M9 8 V2 L19.5 8.5 L11 14" fill="none" stroke="#c5c5c5" stroke-width="1.5" stroke-linejoin="round"/><ellipse cx="6" cy="15" rx="3.3" ry="3.8" fill="none" stroke="#c5c5c5" stroke-width="1.6"/><path d="M1 13 H2.7 M1 17 H2.7 M9.3 13 H11 M9.3 17 H11 M3.5 10.5 L6 11.3 L8.5 10.5 M6 11.5 V18.5" stroke="#c5c5c5" stroke-width="1.3"/></svg>
<svg class="a" style="left:1757px;top:19px;" width="21" height="21" viewBox="0 0 21 21"><path d="M3.5 7 A8 8 0 1 1 3 12" fill="none" stroke="#c5c5c5" stroke-width="1.6"/><path d="M2 3 V8 H7" fill="none" stroke="#c5c5c5" stroke-width="1.6"/><path d="M10 6 V10.5 L13.5 13" fill="none" stroke="#c5c5c5" stroke-width="1.5"/></svg>
<svg class="a" style="left:1797px;top:19px;" width="22" height="22" viewBox="0 0 22 22"><circle cx="4.5" cy="4" r="2.5" fill="none" stroke="#c5c5c5" stroke-width="1.5"/><circle cx="16.5" cy="17.5" r="2.5" fill="none" stroke="#c5c5c5" stroke-width="1.5"/><path d="M4.5 6.5 V12 Q4.5 15.5 8 15.5 H10 M8 13 L10.5 15.5 L8 18" fill="none" stroke="#c5c5c5" stroke-width="1.5"/><path d="M16.5 15 V9.5 Q16.5 6 13 6 H11 M13 3.5 L10.5 6 L13 8.5" fill="none" stroke="#c5c5c5" stroke-width="1.5"/></svg>
<svg class="a" style="left:1839px;top:19px;" width="19" height="19" viewBox="0 0 19 19"><rect x="1" y="1" width="17" height="16.5" rx="2" fill="none" stroke="#c5c5c5" stroke-width="1.6"/><path d="M9.5 1 V17.5" stroke="#c5c5c5" stroke-width="1.6"/></svg>
<svg class="a" style="left:1878px;top:26px;" width="19" height="6" viewBox="0 0 19 6"><circle cx="2.5" cy="3" r="1.4" fill="#c5c5c5"/><circle cx="9.5" cy="3" r="1.4" fill="#c5c5c5"/><circle cx="16.5" cy="3" r="1.4" fill="#c5c5c5"/></svg>
<div class="a" style="left:413px;top:146.19px;font-size:17.5px;line-height:17.5px;color:#999999;font-weight:normal;font-family:'Liberation Sans';white-space:pre;word-spacing:2.5px">Run | Debug</div>
<div class="a" style="left:413px;top:589px;width:1500px;height:2px;background:rgba(255,255,255,0.05);"></div>
<div class="a" style="left:413px;top:617px;width:1500px;height:2px;background:rgba(255,255,255,0.05);"></div>
<div class="a" style="left:1402px;top:79px;width:1px;height:679px;background:#4a4a4a;"></div>
<div class="a" style="left:387px;top:529px;width:3px;height:229px;background:#1b81a8;"></div>
<div class="a" style="left:321px;top:446px;width:15px;height:15px;background:#00796b;"></div>
<div class="a" style="left:321px;top:686px;width:15px;height:15px;background:#ffffff;"></div>
<div class="a" style="left:413px;top:589px;width:20px;height:20px;background:#23231b;"></div>
<svg class="a" style="left:413px;top:589px;" width="20" height="20" viewBox="0 0 20 20"><path d="M10 1.5 C6.8 1.5 4.8 3.8 4.8 6.6 C4.8 9.2 6.8 10.5 7.3 12.5 V15.5 Q7.3 17.8 10 17.8 Q12.7 17.8 12.7 15.5 V12.5 C13.2 10.5 15.2 9.2 15.2 6.6 C15.2 3.8 13.2 1.5 10 1.5 Z" fill="#ffcc00"/><circle cx="9.6" cy="14.5" r="1.1" fill="#3a3000"/></svg>
<div class="a" style="left:586px;top:589px;width:1px;height:169px;background:#5e8aa3;"></div>
<div class="a" style="left:586px;top:589px;width:147px;height:1px;background:#5e8aa3;"></div>
<div class="a" style="left:720px;top:567px;width:1px;height:22px;background:#5e8aa3;"></div>
<div class="a" style="left:720px;top:567px;width:14px;height:1px;background:#5e8aa3;"></div>
<div class="a" style="left:733px;top:567px;width:1px;height:22px;background:#5e8aa3;"></div>
<div class="a" style="left:313px;top:758px;width:1607px;height:1px;background:#414141;"></div>
<div class="a" style="left:338px;top:775.07px;font-size:12.2px;line-height:12.2px;color:#a0a0a0;font-weight:normal;font-family:'Liberation Sans';white-space:pre;">PROBLEMS</div>
<div class="a" style="left:430px;top:775.07px;font-size:12.2px;line-height:12.2px;color:#a0a0a0;font-weight:normal;font-family:'Liberation Sans';white-space:pre;">OUTPUT</div>
<div class="a" style="left:506.5px;top:775.07px;font-size:12.2px;line-height:12.2px;color:#e7e7e7;font-weight:normal;font-family:'Liberation Sans';white-space:pre;">DEBUG CONSOLE</div>
<div class="a" style="left:506px;top:796px;width:106px;height:2px;background:#e7e7e7;"></div>
<div class="a" style="left:638.5px;top:775.07px;font-size:12.2px;line-height:12.2px;color:#a0a0a0;font-weight:normal;font-family:'Liberation Sans';white-space:pre;">TERMINAL</div>
<div class="a" style="left:313px;top:800px;width:1607px;height:2px;background:#181818;"></div>
<div class="a" style="left:1178px;top:766px;width:450px;height:30px;background:#3c3c3c;"></div>
<div class="a" style="left:1903px;top:79px;width:1px;height:679px;background:#3a3a3a;"></div>
<div class="a" style="left:1184px;top:774.64px;font-size:14.6px;line-height:14.6px;color:#a6a6a6;font-weight:normal;font-family:'Liberation Sans';white-space:pre;">Filter (e.g. text, !exclude)</div>
<svg class="a" style="left:1880px;top:773px;" width="14" height="14" viewBox="0 0 14 14"><path d="M2 2 L12 12 M12 2 L2 12" stroke="#c5c5c5" stroke-width="1.6"/></svg>
<div class="a" style="left:350.5px;top:811.16px;font-size:16.1px;line-height:16.1px;color:#4ea0ee;font-weight:normal;font-family:'Liberation Mono';white-space:pre;">Launching lib\main.dart on Android SDK built for x86 in debug mode...</div>
<div class="a" style="left:350.5px;top:834.96px;font-size:16.1px;line-height:16.1px;color:#4ea0ee;font-weight:normal;font-family:'Liberation Mono';white-space:pre;">√ Built build\app\outputs\flutter-apk\app-debug.apk.</div>
<div class="a" style="left:350.5px;top:858.76px;font-size:16.1px;line-height:16.1px;color:#d9a51c;font-weight:normal;font-family:'Liberation Mono';white-space:pre;">Connecting to VM Service at ws://127.0.0.1:17887/6A02rwWg3Mw=/ws</div>
<div class="a" style="left:350.5px;top:882.56px;font-size:16.1px;line-height:16.1px;color:#4ea0ee;font-weight:normal;font-family:'Liberation Mono';white-space:pre;">D/EGL_emulation(22058): eglMakeCurrent: 0xa2497220: ver 2 0 (tinfo 0x90fba030)</div>
<div class="a" style="left:350.5px;top:906.36px;font-size:16.1px;line-height:16.1px;color:#4ea0ee;font-weight:normal;font-family:'Liberation Mono';white-space:pre;">Reloaded 1 of 529 libraries in 1,790ms.</div>
<div class="a" style="left:350.5px;top:930.16px;font-size:16.1px;line-height:16.1px;color:#4ea0ee;font-weight:normal;font-family:'Liberation Mono';white-space:pre;">Reloaded 1 of 529 libraries in 1,350ms.</div>
<div class="a" style="left:1860px;top:812.92px;font-size:13.8px;line-height:13.8px;color:#cccccc;font-weight:normal;font-family:'Liberation Mono';white-space:pre;text-decoration:underline">lart:1</div>
<div class="a" style="left:313px;top:949px;width:1607px;height:1px;background:#3c3c3c;"></div>
<svg class="a" style="left:327px;top:953px;" width="12" height="14" viewBox="0 0 12 14"><path d="M3 2 L9 7 L3 12" fill="none" stroke="#c5c5c5" stroke-width="1.5"/></svg>
<svg class="a" style="left:18px;top:976px;" width="16" height="20" viewBox="0 0 16 20"><circle cx="4" cy="3.5" r="2.2" fill="none" stroke="#ffffff" stroke-width="1.4"/><circle cx="4" cy="16" r="2.2" fill="none" stroke="#ffffff" stroke-width="1.4"/><circle cx="12" cy="6.5" r="2.2" fill="none" stroke="#ffffff" stroke-width="1.4"/><path d="M4 5.7 V13.8 M12 8.7 Q12 12 5.5 13.8" fill="none" stroke="#ffffff" stroke-width="1.4"/></svg>
<div class="a" style="left:40px;top:978.97px;font-size:14.8px;line-height:14.8px;color:#ffffff;font-weight:normal;font-family:'Liberation Sans';white-space:pre;">main*</div>
<svg class="a" style="left:99px;top:977px;" width="18" height="18" viewBox="0 0 18 18"><path d="M3 9 A6 6 0 0 1 14 5.5 M15 9 A6 6 0 0 1 4 12.5" fill="none" stroke="#ffffff" stroke-width="1.5"/><path d="M14.5 2 V6 H10.5 M3.5 16 V12 H7.5" fill="none" stroke="#ffffff" stroke-width="1.5"/></svg>
<div class="a" style="left:122px;top:978.97px;font-size:14.8px;line-height:14.8px;color:#ffffff;font-weight:normal;font-family:'Liberation Sans';white-space:pre;letter-spacing:-0.5px">1↓ 0↑</div>
<svg class="a" style="left:175px;top:977px;" width="18" height="18" viewBox="0 0 18 18"><circle cx="9" cy="9" r="7" fill="none" stroke="#ffffff" stroke-width="1.3"/><path d="M6 6 L12 12 M12 6 L6 12" stroke="#ffffff" stroke-width="1.3"/></svg>
<div class="a" style="left:197px;top:978.97px;font-size:14.8px;line-height:14.8px;color:#ffffff;font-weight:normal;font-family:'Liberation Sans';white-space:pre;">0</div>
<svg class="a" style="left:209px;top:976px;" width="19" height="18" viewBox="0 0 19 18"><path d="M9.5 2 L17.5 16 H1.5 Z" fill="none" stroke="#ffffff" stroke-width="1.3" stroke-linejoin="round"/><path d="M9.5 7 V11.5 M9.5 13 V14.5" stroke="#ffffff" stroke-width="1.4"/></svg>
<div class="a" style="left:232px;top:978.97px;font-size:14.8px;line-height:14.8px;color:#ffffff;font-weight:normal;font-family:'Liberation Sans';white-space:pre;">0</div>
<svg class="a" style="left:258px;top:977px;" width="19" height="19" viewBox="0 0 19 19"><path d="M8 2 L17 8 L8 14" fill="none" stroke="#ffffff" stroke-width="1.4"/><circle cx="5" cy="13" r="3" fill="none" stroke="#ffffff" stroke-width="1.4"/></svg>
<div class="a" style="left:281px;top:978.89px;font-size:14.9px;line-height:14.9px;color:#ffffff;font-weight:normal;font-family:'Liberation Sans';white-space:pre;">mi_card_flutter (Hello-World_Dart-App)</div>
<div class="a" style="left:560px;top:978.97px;font-size:14.8px;line-height:14.8px;color:#ffffff;font-weight:normal;font-family:'Liberation Sans';white-space:pre;">Debug my code</div>
<div class="a" style="left:1022.5px;top:979.40px;font-size:14.3px;line-height:14.3px;color:#ffffff;font-weight:normal;font-family:'Liberation Sans';white-space:pre;">Ln 17, Col 31</div>
<div class="a" style="left:1128px;top:979.40px;font-size:14.3px;line-height:14.3px;color:#ffffff;font-weight:normal;font-family:'Liberation Sans';white-space:pre;">Spaces: 2</div>
<div class="a" style="left:1209px;top:978.97px;font-size:14.8px;line-height:14.8px;color:#ffffff;font-weight:normal;font-family:'Liberation Sans';white-space:pre;">UTF-8</div>
<div class="a" style="left:1268px;top:979.48px;font-size:14.2px;line-height:14.2px;color:#ffffff;font-weight:normal;font-family:'Liberation Sans';white-space:pre;">CRLF</div>
<div class="a" style="left:1321px;top:978.97px;font-size:14.8px;line-height:14.8px;color:#ffffff;font-weight:normal;font-family:'Liberation Sans';white-space:pre;">Dart</div>
<svg class="a" style="left:1370px;top:977px;" width="16" height="18" viewBox="0 0 16 18"><circle cx="8" cy="7.5" r="2" fill="#ffffff"/><path d="M4.5 11 A5 5 0 1 1 11.5 11 M2.5 13 A7.5 7.5 0 1 1 13.5 13" fill="none" stroke="#ffffff" stroke-width="1.4"/><path d="M8 9.5 V17" stroke="#ffffff" stroke-width="1.8"/></svg>
<div class="a" style="left:1391px;top:978.97px;font-size:14.8px;line-height:14.8px;color:#ffffff;font-weight:normal;font-family:'Liberation Sans';white-space:pre;">Go Live</div>
<div class="a" style="left:1460px;top:979.14px;font-size:14.6px;line-height:14.6px;color:#ffffff;font-weight:normal;font-family:'Liberation Sans';white-space:pre;">Flutter: 1.22.5</div>
<div class="a" style="left:1569px;top:978.92px;font-size:14.86px;line-height:14.86px;color:#ffffff;font-weight:normal;font-family:'Liberation Sans';white-space:pre;">Nexus 6 API 26 (android-x86 emulator)</div>
<svg class="a" style="left:1846px;top:976px;" width="20" height="20" viewBox="0 0 20 20"><circle cx="6" cy="7" r="3" fill="none" stroke="#ffffff" stroke-width="1.3"/><path d="M1 17 Q1 11 6 11 Q11 11 11 17" fill="none" stroke="#ffffff" stroke-width="1.3"/><path d="M9 2 H18 V10 H14 L12 12" fill="none" stroke="#ffffff" stroke-width="1.3"/></svg>
<svg class="a" style="left:1884px;top:976px;" width="18" height="20" viewBox="0 0 18 20"><path d="M9 2 A5.5 5.5 0 0 0 3.5 7.5 V12 L2 14.5 H16 L14.5 12 V7.5 A5.5 5.5 0 0 0 9 2 Z" fill="none" stroke="#ffffff" stroke-width="1.4"/><path d="M7 16.5 A2 2 0 0 0 11 16.5" fill="none" stroke="#ffffff" stroke-width="1.4"/></svg>
<div class="a" style="left:1295px;top:1000px;width:62px;height:3px;background:#555555;"></div>
<div class="a" style="left:1812px;top:95px;width:30px;height:2px;background:#4a7fb0;opacity:0.55"></div>
<div class="a" style="left:1824px;top:95px;width:20px;height:2px;background:#4ec9b0;opacity:0.55"></div>
<div class="a" style="left:1845px;top:96px;width:20px;height:2px;background:#6a9955;opacity:0.55"></div>
<div class="a" style="left:1816px;top:101px;width:14px;height:2px;background:#4ec9b0;opacity:0.55"></div>
<div class="a" style="left:1834px;top:102px;width:22px;height:2px;background:#569cd6;opacity:0.55"></div>
<div class="a" style="left:1822px;top:108px;width:28px;height:2px;background:#b5cea8;opacity:0.55"></div>
<div class="a" style="left:1840px;top:112px;width:24px;height:2px;background:#d4d4d4;opacity:0.55"></div>
<div class="a" style="left:1832px;top:118px;width:30px;height:2px;background:#4ec9b0;opacity:0.55"></div>
<div class="a" style="left:1850px;top:122px;width:16px;height:2px;background:#9cdcfe;opacity:0.55"></div>
<div class="a" style="left:1836px;top:128px;width:30px;height:2px;background:#1b81a8;opacity:0.55"></div>
<div class="a" style="left:1845px;top:135px;width:20px;height:2px;background:#9e9e9e;opacity:0.55"></div>
<div class="a" style="left:1848px;top:142px;width:12px;height:2px;background:#4ec9b0;opacity:0.55"></div>
<div class="a" style="left:1425px;top:51px;width:495px;height:40px;background:#333333;box-shadow:0 2px 6px rgba(0,0,0,0.6)"></div>
<div class="a" style="left:1439.7px;top:64.2px;width:2.6px;height:2.6px;background:#6e6e6e;"></div>
<div class="a" style="left:1439.7px;top:69.7px;width:2.6px;height:2.6px;background:#6e6e6e;"></div>
<div class="a" style="left:1439.7px;top:75.2px;width:2.6px;height:2.6px;background:#6e6e6e;"></div>
<div class="a" style="left:1445.7px;top:64.2px;width:2.6px;height:2.6px;background:#6e6e6e;"></div>
<div class="a" style="left:1445.7px;top:69.7px;width:2.6px;height:2.6px;background:#6e6e6e;"></div>
<div class="a" style="left:1445.7px;top:75.2px;width:2.6px;height:2.6px;background:#6e6e6e;"></div>
<div class="a" style="left:1469.3px;top:65px;width:2px;height:12.5px;background:#75beff;border-radius:1px"></div>
<div class="a" style="left:1476.3px;top:65px;width:2px;height:12.5px;background:#75beff;border-radius:1px"></div>
<svg class="a" style="left:1504px;top:62px;" width="20" height="18" viewBox="0 0 20 18"><path d="M2 10 A7.5 7.5 0 0 1 16 6.5" fill="none" stroke="#5a87b3" stroke-width="1.6"/><path d="M17 2 V7.5 H11.5" fill="none" stroke="#5a87b3" stroke-width="1.6"/><rect x="7" y="12.5" width="4.5" height="4.5" transform="rotate(45 9.25 14.75)" fill="#5a87b3"/></svg>
<svg class="a" style="left:1546px;top:62px;" width="14" height="18" viewBox="0 0 14 18"><path d="M7 1 V10 M2.5 6 L7 10.5 L11.5 6" fill="none" stroke="#5a87b3" stroke-width="1.6"/><circle cx="7" cy="14.5" r="2.3" fill="#5a87b3"/></svg>
<svg class="a" style="left:1587px;top:62px;" width="14" height="18" viewBox="0 0 14 18"><path d="M7 11 V2 M2.5 6 L7 1.5 L11.5 6" fill="none" stroke="#5a87b3" stroke-width="1.6"/><circle cx="7" cy="14.5" r="2.3" fill="#5a87b3"/></svg>
<svg class="a" style="left:1626px;top:60px;" width="14" height="20" viewBox="0 0 14 20"><path d="M9 1 L2 11.5 H7 L5 19 L12.5 8 H7.5 Z" fill="#f5a623"/></svg>
<svg class="a" style="left:1664px;top:62px;" width="20" height="18" viewBox="0 0 20 18"><path d="M5 5 A6.5 6.5 0 1 1 4 12" fill="none" stroke="#89d185" stroke-width="1.9"/><path d="M3 1.5 V6.5 H8" fill="none" stroke="#89d185" stroke-width="1.9"/></svg>
<div class="a" style="left:1706px;top:63.5px;width:16px;height:15px;background:transparent;border:2px solid #f48771;border-radius:1px"></div>
<svg class="a" style="left:1743px;top:61px;" width="22" height="21" viewBox="0 0 22 21"><circle cx="9" cy="9" r="7.5" fill="none" stroke="#1ea4e9" stroke-width="1.9"/><path d="M14.5 14.5 L20 20" stroke="#1ea4e9" stroke-width="2.4"/><path d="M11 5 L6.5 9.5 L11 13" fill="none" stroke="#1ea4e9" stroke-width="1.6"/></svg>
<div class="a" style="left:1774px;top:59px;width:137px;height:25px;background:#3c3c3c;"></div>
<div class="a" style="left:1783px;top:63.90px;font-size:16.3px;line-height:16.3px;color:#e8e8e8;font-weight:normal;font-family:'Liberation Sans';white-space:pre;">Dart</div>
<svg class="a" style="left:1888px;top:66px;" width="14" height="10" viewBox="0 0 14 10"><path d="M1.5 2 L7 7.5 L12.5 2" fill="none" stroke="#a0a0a0" stroke-width="1.5"/></svg>
<div class="a" style="left:1867px;top:93px;width:53px;height:530px;background:#263238;border-left:1px solid #161b1e;border-bottom:1px solid #161b1e"></div>
<div class="a" style="left:1882px;top:110px;width:8px;height:1.5px;background:#9e9e9e;"></div>
<svg class="a" style="left:1909px;top:107px;" width="10" height="10" viewBox="0 0 10 10"><path d="M1 1 L9 9 M9 1 L1 9" stroke="#e0e0e0" stroke-width="1.5"/></svg>
<svg class="a" style="left:1889px;top:136px;" width="22" height="20" viewBox="0 0 22 20"><path d="M11 1.5 V9" stroke="#ffffff" stroke-width="2.2"/><path d="M6 4.5 A8 8 0 1 0 16 4.5" fill="none" stroke="#ffffff" stroke-width="2.2"/></svg>
<svg class="a" style="left:1889px;top:180px;" width="22" height="21" viewBox="0 0 22 21"><path d="M1.5 7 H5.5 L10.5 2 V19 L5.5 14 H1.5 Z" fill="#ffffff"/><path d="M13 6.5 A4.5 4.5 0 0 1 13 14.5" fill="none" stroke="#ffffff" stroke-width="2"/><path d="M14.5 2.5 A8.5 8.5 0 0 1 14.5 18.5" fill="none" stroke="#ffffff" stroke-width="2"/></svg>
<svg class="a" style="left:1892px;top:228px;" width="16" height="17" viewBox="0 0 16 17"><path d="M1 5.5 H4.5 L9.5 0.5 V16.5 L4.5 11.5 H1 Z" fill="#ffffff"/><path d="M11.5 5 A3.5 3.5 0 0 1 11.5 12" fill="none" stroke="#ffffff" stroke-width="2"/></svg>
<svg class="a" style="left:1888px;top:268px;" width="25" height="25" viewBox="0 0 25 25"><rect x="5" y="6.5" width="11" height="15" rx="1.5" transform="rotate(45 10.5 14)" fill="none" stroke="#ffffff" stroke-width="2"/><path d="M15 2 A8.5 8.5 0 0 1 23 9" fill="none" stroke="#ffffff" stroke-width="1.4"/></svg>
<svg class="a" style="left:1888px;top:314px;" width="25" height="25" viewBox="0 0 25 25"><rect x="9" y="6.5" width="11" height="15" rx="1.5" transform="rotate(-45 14.5 14)" fill="none" stroke="#ffffff" stroke-width="2"/><path d="M10 2 A8.5 8.5 0 0 0 2 9" fill="none" stroke="#ffffff" stroke-width="1.4"/></svg>
<svg class="a" style="left:1889px;top:360px;" width="22" height="20" viewBox="0 0 22 20"><path d="M7 3.5 L8.5 1 H13.5 L15 3.5 H19.5 Q21 3.5 21 5 V17.5 Q21 19 19.5 19 H2.5 Q1 19 1 17.5 V5 Q1 3.5 2.5 3.5 Z" fill="#ffffff"/><circle cx="11" cy="11" r="4" fill="#263238"/><circle cx="11" cy="11" r="2.3" fill="#ffffff"/></svg>
<svg class="a" style="left:1889px;top:406px;" width="21" height="20" viewBox="0 0 21 20"><circle cx="7.5" cy="7.5" r="6" fill="none" stroke="#ffffff" stroke-width="1.8"/><path d="M12 12 L19 19" stroke="#ffffff" stroke-width="2.2"/><path d="M7.5 4.5 V10.5 M4.5 7.5 H10.5" stroke="#ffffff" stroke-width="1.5"/></svg>
<svg class="a" style="left:1892px;top:452px;" width="16" height="18" viewBox="0 0 16 18"><path d="M14 2 V16 L2.5 9 Z" fill="none" stroke="#ffffff" stroke-width="1.8" stroke-linejoin="round"/></svg>
<svg class="a" style="left:1892px;top:498px;" width="16" height="16" viewBox="0 0 16 16"><circle cx="8" cy="8" r="6.5" fill="none" stroke="#ffffff" stroke-width="1.8"/></svg>
<svg class="a" style="left:1892px;top:543px;" width="16" height="16" viewBox="0 0 16 16"><rect x="1.5" y="1.5" width="13" height="13" fill="none" stroke="#ffffff" stroke-width="1.8"/></svg>
<div class="a" style="left:1892.5px;top:594px;width:4px;height:4px;background:#ffffff;border-radius:50%"></div>
<div class="a" style="left:1898.2px;top:594px;width:4px;height:4px;background:#ffffff;border-radius:50%"></div>
<div class="a" style="left:1904px;top:594px;width:4px;height:4px;background:#ffffff;border-radius:50%"></div>
<svg class="a" style="left:0px;top:0px;" width="1920" height="1003" viewBox="0 0 1920 1003"><defs>
<linearGradient id="bh" x1="1416" x2="1857" y1="0" y2="0" gradientUnits="userSpaceOnUse">
<stop offset="0" stop-color="#0a0a0a" stop-opacity="1"/><stop offset="0.0215" stop-color="#4a4a4a" stop-opacity="1"/>
<stop offset="0.0216" stop-color="#2a2a2a" stop-opacity="0"/><stop offset="0.975" stop-color="#2a2a2a" stop-opacity="0"/>
<stop offset="0.976" stop-color="#000" stop-opacity="1"/><stop offset="1" stop-color="#6a6a6a" stop-opacity="1"/></linearGradient>
<linearGradient id="bv" x1="0" x2="0" y1="96" y2="939" gradientUnits="userSpaceOnUse">
<stop offset="0" stop-color="#262626"/><stop offset="0.013" stop-color="#464646"/><stop offset="0.016" stop-color="#2a2a2a"/>
<stop offset="0.98" stop-color="#2a2a2a"/><stop offset="0.988" stop-color="#3c3c3c"/><stop offset="1" stop-color="#1c1c1c"/></linearGradient>
<linearGradient id="fc" x1="1426" x2="1847" y1="0" y2="0" gradientUnits="userSpaceOnUse">
<stop offset="0" stop-color="#000"/><stop offset="0.4" stop-color="#000"/><stop offset="1" stop-color="#1b1b1b"/></linearGradient>
</defs>
<path d="M1508.50,94.00 H1764.50 C1832.90,94.00 1859.50,111.36 1859.50,156.00 V883.50 C1859.50,925.26 1835.70,941.50 1774.50,941.50 H1498.50 C1437.30,941.50 1413.50,925.26 1413.50,883.50 V156.00 C1413.50,111.36 1440.10,94.00 1508.50,94.00 Z" fill="#8a8a8a"/>
<path d="M1508.50,95.30 H1764.50 C1831.96,95.30 1858.20,112.30 1858.20,156.00 V883.50 C1858.20,924.32 1834.76,940.20 1774.50,940.20 H1498.50 C1438.24,940.20 1414.80,924.32 1414.80,883.50 V156.00 C1414.80,112.30 1441.04,95.30 1508.50,95.30 Z" fill="#000"/>
<path d="M1508.50,97.00 H1764.50 C1830.74,97.00 1856.50,113.52 1856.50,156.00 V883.50 C1856.50,923.10 1833.54,938.50 1774.50,938.50 H1498.50 C1439.46,938.50 1416.50,923.10 1416.50,883.50 V156.00 C1416.50,113.52 1442.26,97.00 1508.50,97.00 Z" fill="url(#bv)"/>
<path d="M1508.50,97.00 H1764.50 C1830.74,97.00 1856.50,113.52 1856.50,156.00 V883.50 C1856.50,923.10 1833.54,938.50 1774.50,938.50 H1498.50 C1439.46,938.50 1416.50,923.10 1416.50,883.50 V156.00 C1416.50,113.52 1442.26,97.00 1508.50,97.00 Z" fill="url(#bh)"/>
<path d="M1500.00,107.50 H1773.00 C1827.76,107.50 1847.00,119.98 1847.00,155.50 V885.50 C1847.00,919.54 1829.84,931.50 1781.00,931.50 H1492.00 C1443.16,931.50 1426.00,919.54 1426.00,885.50 V155.50 C1426.00,119.98 1445.24,107.50 1500.00,107.50 Z" fill="url(#fc)"/></svg>
<div class="a" style="left:1434px;top:160px;width:408px;height:677px;background:#00695c;"></div>
<div class="a" style="left:1434px;top:160px;width:408px;height:23px;background:#004d40;"></div>
<div class="a" style="left:1434px;top:837px;width:408px;height:48px;background:#000000;"></div>
<svg class="a" style="left:1515px;top:852px;" width="16" height="18" viewBox="0 0 16 18"><path d="M15.5 1 V17 L1 9 Z" fill="#ffffff"/></svg>
<div class="a" style="left:1629px;top:853px;width:16px;height:16px;background:#ffffff;border-radius:50%"></div>
<div class="a" style="left:1744px;top:853px;width:15px;height:15px;background:#ffffff;"></div>
<div class="a" style="left:1574px;top:110px;width:130px;height:16px;background:#0a0a0a;border-radius:8px;border:2px solid #2c2c2c;box-shadow:inset 0 0 0 2px #1a1a1a"></div>
<div class="a" style="left:1574px;top:903px;width:130px;height:16px;background:#0a0a0a;border-radius:8px;border:2px solid #2c2c2c;box-shadow:inset 0 0 0 2px #1a1a1a"></div>
<div class="a" style="left:1755px;top:114px;width:10px;height:10px;background:#2d3a5a;border-radius:50%;box-shadow:0 0 2px #111"></div>
<div class="a" style="left:1434px;top:160px;width:408px;height:677px;overflow:hidden"><div class="a" style="left:334px;top:17px;width:100px;height:12.5px;background:rgba(150,30,30,0.68);transform:rotate(45deg);transform-origin:50% 50%;color:#ffffff;font-size:10px;font-weight:bold;line-height:12.5px;text-align:center;letter-spacing:0.4px;box-shadow:0 1px 3px rgba(0,0,0,0.35)">DEBUG</div></div>
<div class="a" style="left:1445px;top:165px;width:13px;height:13px;background:#5c9e96;border-radius:50%;border:2.5px solid #ffffff"></div>
<svg class="a" style="left:1470px;top:164px;" width="12" height="15" viewBox="0 0 12 15"><path d="M3 0.5 H11.5 V14.5 H0.5 V3 Z" fill="#ffffff"/><path d="M5 1.5 V4.5 M7 1.5 V4.5 M9 1.5 V4.5" stroke="#004d40" stroke-width="1"/></svg>
<svg class="a" style="left:1740px;top:165px;" width="18" height="14" viewBox="0 0 18 14"><path d="M0.5 4 A12.5 12.5 0 0 1 17.5 4 L9 13.5 Z" fill="#ffffff"/></svg>
<svg class="a" style="left:1759px;top:165px;" width="15" height="14" viewBox="0 0 15 14"><path d="M14 0.5 V13.5 H0.5 Z" fill="#6aa39b"/><path d="M9 6 V13.5 H1 L9 6 Z" fill="#ffffff"/></svg>
<svg class="a" style="left:1782px;top:164px;" width="10" height="15" viewBox="0 0 10 15"><path d="M3 0.5 H7 V1.8 H9.5 V14.5 H0.5 V1.8 H3 Z" fill="#ffffff"/></svg>
<div class="a" style="left:1799px;top:165.03px;font-size:13.2px;line-height:13.2px;color:#ffffff;font-weight:normal;font-family:'Liberation Sans';white-space:pre;">10:59</div>
<svg class="a" style="left:1518px;top:455px;" width="122" height="55" viewBox="0 0 1920 866"><g fill="none" stroke="#ffffff" stroke-width="86" stroke-linecap="round" stroke-linejoin="round"><path d="M100,330 C150,270 230,190 290,220 C330,250 300,400 275,520 C255,600 240,660 235,700"/><path d="M180,490 C300,480 450,470 560,440 C660,410 700,280 680,210 C660,150 590,180 550,240 C480,340 450,520 480,620 C510,700 600,690 680,640"/><path d="M770,570 C830,580 935,545 945,485 C955,415 840,405 790,475 C740,545 755,680 860,690 C920,695 990,650 1040,600"/><path d="M1040,600 C1110,520 1240,330 1245,220 C1250,120 1150,130 1110,220 C1050,340 1030,520 1055,640 C1075,710 1170,690 1240,620"/><path d="M1240,620 C1310,540 1440,330 1445,220 C1450,120 1350,130 1310,220 C1250,340 1240,520 1265,640 C1285,710 1370,690 1420,640"/><path d="M1530,470 C1440,470 1410,560 1420,630 C1435,700 1530,710 1570,660 C1620,600 1610,490 1550,470 C1530,465 1520,480 1530,490 M1580,490 C1610,500 1640,490 1660,470"/></g></svg>
<svg class="a" style="left:1638px;top:455px;" width="122" height="55" viewBox="0 0 1920 866"><g fill="none" stroke="#ffffff" stroke-width="86" stroke-linecap="round" stroke-linejoin="round"><path d="M75,195 C60,350 60,560 100,650 C130,710 200,700 250,600 C300,500 350,320 370,210 C350,350 340,560 380,650 C420,720 500,690 560,600 C610,520 700,420 690,290 C680,190 590,180 560,260 C540,330 570,440 650,470 C700,490 740,480 770,470"/><path d="M850,460 C770,460 750,560 765,625 C790,700 890,700 925,630 C960,560 935,470 870,460 M900,490 C940,500 980,500 1010,490"/><path d="M990,500 C1030,490 1060,475 1090,485 C1105,560 1075,640 1062,700 M1085,570 C1120,480 1190,440 1240,470 C1270,495 1285,560 1300,620"/><path d="M1290,620 C1360,520 1540,340 1535,210 C1530,120 1440,140 1400,230 C1340,360 1310,560 1360,650 C1390,710 1480,690 1530,630"/><path d="M1690,480 C1600,430 1540,560 1560,640 C1580,710 1660,690 1700,600"/><path d="M1700,600 C1770,450 1860,310 1845,190 C1835,110 1750,140 1715,250 C1675,380 1665,560 1685,650 C1695,710 1740,720 1760,690"/></g></svg>
<div class="a" style="left:1525px;top:520.77px;font-size:20px;line-height:20px;color:#b2dfdb;font-weight:bold;font-family:'Liberation Sans';white-space:pre;letter-spacing:1.75px">MLH Local Hack Day</div>
<div class="a" style="left:1563px;top:556px;width:149px;height:1px;background:#5aa79d;"></div>
<div class="a" style="left:1859.5px;top:375px;width:2.5px;height:44px;background:linear-gradient(90deg,#777,#b0b0b0);border-radius:1px"></div>
<div class="a" style="left:1859.5px;top:447px;width:2.5px;height:101px;background:linear-gradient(90deg,#666,#a0a0a0);border-radius:1px"></div>
</body></html>
